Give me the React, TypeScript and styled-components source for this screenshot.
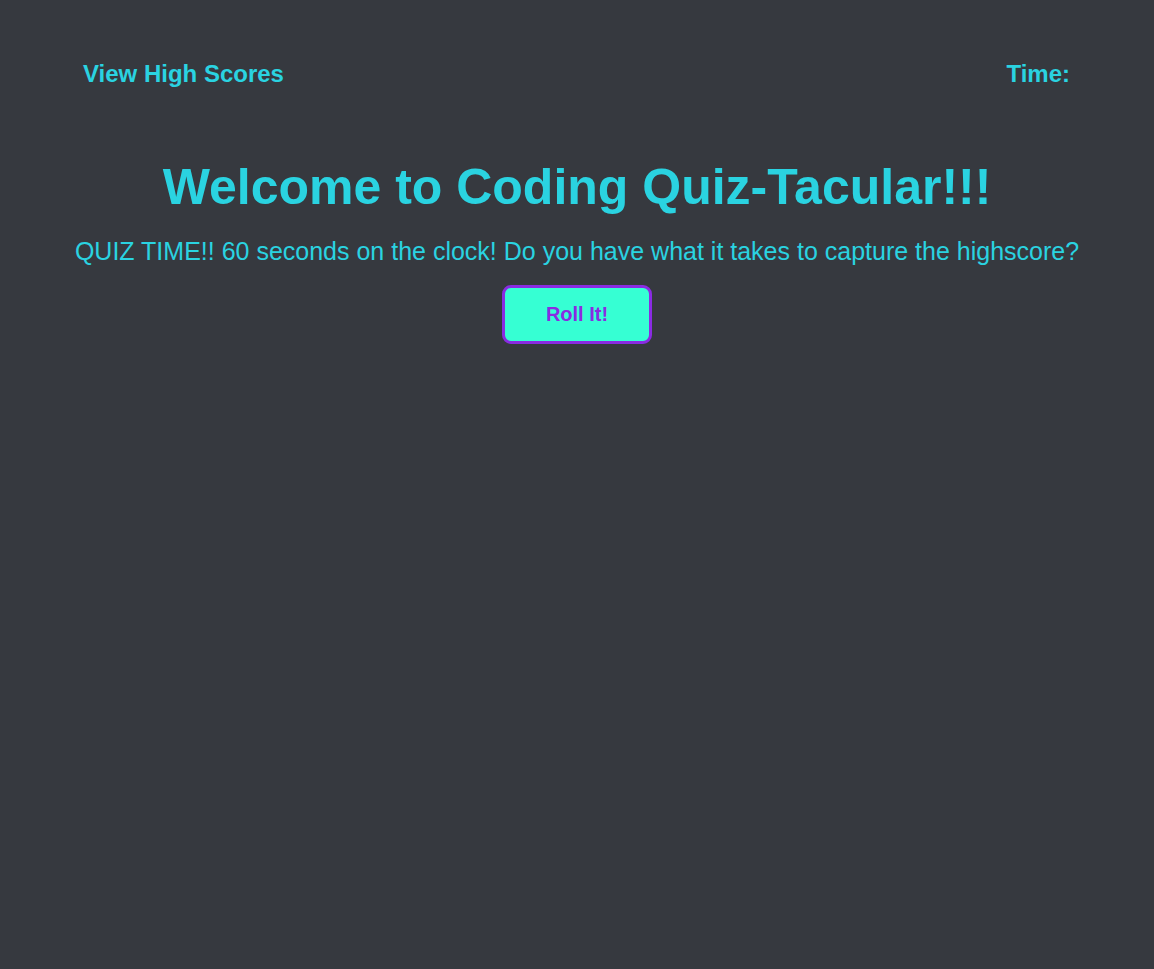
import React from "react";
import styled, { createGlobalStyle } from "styled-components";

const GlobalStyle = createGlobalStyle`
  html, body {
    margin: 0;
    padding: 0;
    background: #36393f;
    font-family: "Liberation Sans", Arial, sans-serif;
    min-height: 100%;
  }
`;

const Page = styled.div`
  min-height: 969px;
  background: #36393f;
  color: #2ad3e1;
`;

const Header = styled.header`
  display: flex;
  justify-content: space-between;
  align-items: center;
  padding: 60px 84px 0 83px;
`;

const NavText = styled.span`
  font-size: 24px;
  font-weight: bold;
  color: #2ad3e1;
`;

const Main = styled.main`
  display: flex;
  flex-direction: column;
  align-items: center;
  text-align: center;
`;

const Title = styled.h1`
  margin: 70px 0 21px;
  font-size: 50px;
  font-weight: bold;
  color: #2ad3e1;
`;

const Intro = styled.p`
  margin: 0 0 19px;
  font-size: 25px;
  color: #2ad3e1;
`;

const StartButton = styled.button`
  box-sizing: border-box;
  width: 150px;
  height: 59px;
  background: #36ffd3;
  border: 3px solid #8a2be2;
  border-radius: 9px;
  color: #8a2be2;
  font-family: "Liberation Sans", Arial, sans-serif;
  font-size: 20px;
  font-weight: bold;
  cursor: pointer;
`;

export default function App() {
  return (
    <Page>
      <GlobalStyle />
      <Header>
        <NavText>View High Scores</NavText>
        <NavText>Time:</NavText>
      </Header>
      <Main>
        <Title>Welcome to Coding Quiz-Tacular!!!</Title>
        <Intro>
          QUIZ TIME!! 60 seconds on the clock! Do you have what it takes to capture the highscore?
        </Intro>
        <StartButton>Roll It!</StartButton>
      </Main>
    </Page>
  );
}
